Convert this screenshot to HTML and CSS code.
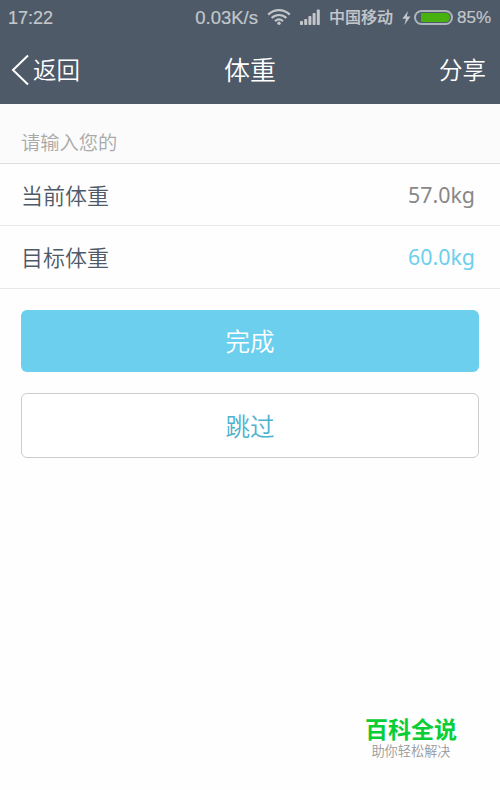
FILE: index.html
```html
<!DOCTYPE html>
<html lang="zh-CN">
  <head>
    <meta charset="UTF-8" />
    <meta name="viewport" content="width=device-width, initial-scale=1.0" />
    <title>体重</title>
    <link rel="stylesheet" href="styles.css">
  </head>
  <body>
    <header class="top">
      <div class="status-bar">
        <span class="time">17:22</span>
        <span class="speed">0.03K/s</span>
        <svg class="wifi" width="24" height="18" viewBox="0 0 24 18" fill="none" stroke="#c3c7cc" stroke-width="2.2">
          <path d="M1.2 6.6C7.5 .6 16.5 .6 22.8 6.6" />
          <path d="M4.6 10C9 6 15 6 19.4 10" />
          <path d="M8 13.2C10.4 11 13.6 11 16 13.2" />
          <circle cx="12" cy="15.3" r="1.7" fill="#c3c7cc" stroke="none" />
        </svg>
        <svg class="signal" width="20" height="16" viewBox="0 0 20 16" fill="#c3c7cc">
          <rect x="0" y="12" width="3" height="4" rx=".8" />
          <rect x="4.2" y="10" width="3" height="6" rx=".8" />
          <rect x="8.4" y="7" width="3" height="9" rx=".8" />
          <rect x="12.6" y="4" width="3" height="12" rx=".8" />
          <rect x="16.8" y="0.5" width="3" height="15.5" rx=".8" />
        </svg>
        <span class="carrier">中国移动</span>
        <svg class="bolt" width="9" height="14" viewBox="0 0 9 14" fill="#c3c7cc">
          <path d="M6 0L.3 7.8H4L2.4 14L8.5 5.5H4.8Z" />
        </svg>
        <span class="battery"><span class="battery-level"></span></span>
        <span class="percent">85%</span>
      </div>
      <nav class="nav-bar">
        <a class="back">
          <svg width="18" height="32" viewBox="0 0 18 32" fill="none" stroke="#fff" stroke-width="2">
            <path d="M17 1.5L2 16L17 30.5" />
          </svg>
          <span>返回</span>
        </a>
        <h1 class="title">体重</h1>
        <a class="share">分享</a>
      </nav>
    </header>

    <main>
      <p class="hint">请输入您的</p>
      <div class="row">
        <span class="label">当前体重</span>
        <span class="value">57.0kg</span>
      </div>
      <div class="row">
        <span class="label">目标体重</span>
        <span class="value active">60.0kg</span>
      </div>
      <div class="buttons">
        <button class="btn done">完成</button>
        <button class="btn skip">跳过</button>
      </div>
    </main>

    <footer class="brand">
      <strong class="brand-name">百科全说</strong>
      <span class="brand-text">助你轻松解决</span>
    </footer>
  </body>
</html>
```

FILE: styles.css
```css
* {
  box-sizing: border-box;
}

body {
  margin: 0;
  height: 100vh;
  display: flex;
  flex-direction: column;
  background-color: #fefefe;
  font-family: "Noto Sans CJK SC", sans-serif;
  font-weight: 350;
}

.top {
  height: 104px;
  background-color: #4e5a68;
  color: #fff;
}

.status-bar {
  display: flex;
  align-items: center;
  height: 36px;
  padding: 0 9px 0 8px;
  color: #c3c7cc;
  font-family: "Liberation Sans", "Noto Sans CJK SC", sans-serif;
  font-size: 18px;
  line-height: 36px;
  -webkit-text-stroke: 0.2px #c3c7cc;
}

.speed {
  margin-left: auto;
  font-size: 18.5px;
}

.wifi {
  margin-left: 9px;
  margin-bottom: 2px;
}

.signal {
  margin-left: 9px;
  margin-bottom: 2px;
}

.carrier {
  margin-left: 9px;
  font-size: 16px;
  font-weight: 500;
}

.bolt {
  margin-left: 9px;
  margin-bottom: 1px;
}

.battery {
  width: 39px;
  height: 15px;
  margin-left: 3px;
  margin-bottom: 1px;
  padding: 1px 1px 1px 5px;
  border: 2px solid #aeb4bb;
  border-radius: 8px;
}

.battery-level {
  display: block;
  height: 100%;
  background-color: #49b10f;
  border-radius: 1px 5px 5px 1px;
}

.percent {
  margin-left: 4px;
  font-size: 17px;
}

.nav-bar {
  display: grid;
  grid-template-columns: 1fr auto 1fr;
  align-items: center;
  height: 68px;
  padding: 0 14px 2px;
  font-size: 23.5px;
}

.back {
  display: flex;
  align-items: center;
  gap: 4px;
  margin-left: -3px;
}

.back svg {
  margin-top: 2px;
}

.title {
  margin: 0 0 2px;
  font-size: 26px;
  font-weight: 350;
}

.share {
  text-align: right;
}

.hint {
  height: 60px;
  margin: 0;
  padding: 22px 21px 0;
  border-bottom: 1px solid #dedede;
  background-color: #fbfbfb;
  color: #a9a9a9;
  font-size: 19.3px;
  line-height: 32px;
}

.row {
  display: flex;
  align-items: center;
  justify-content: space-between;
  height: 62px;
  padding: 0 25px 1px 21px;
  border-bottom: 1px solid #e8e8e8;
  font-size: 22px;
}

.row + .row {
  height: 63px;
  padding-bottom: 2px;
}

.label {
  color: #4e5a68;
}

.value {
  color: #888;
  font-family: "Noto Sans", sans-serif;
  font-size: 21.4px;
  font-weight: 400;
}

.value.active {
  color: #6bcfed;
}

.buttons {
  display: flex;
  flex-direction: column;
  gap: 21px;
  padding: 21px 21px 0;
}

.btn {
  height: 62px;
  padding: 0 0 1px;
  border: none;
  border-radius: 6px;
  font-family: inherit;
  font-size: 24.5px;
  font-weight: 350;
}

.done {
  background-color: #6bcfed;
  color: #fff;
}

.skip {
  height: 65px;
  border: 1.5px solid #ccc;
  background-color: #fff;
  color: #4db2cf;
}

.brand {
  display: flex;
  flex-direction: column;
  align-items: center;
  align-self: flex-end;
  margin-top: auto;
  margin-right: 43px;
  padding-bottom: 29px;
}

.brand-name {
  color: #09ce36;
  font-size: 23px;
  font-weight: 700;
  line-height: 25px;
}

.brand-text {
  color: #999;
  font-size: 13.2px;
  line-height: 20px;
}
```
